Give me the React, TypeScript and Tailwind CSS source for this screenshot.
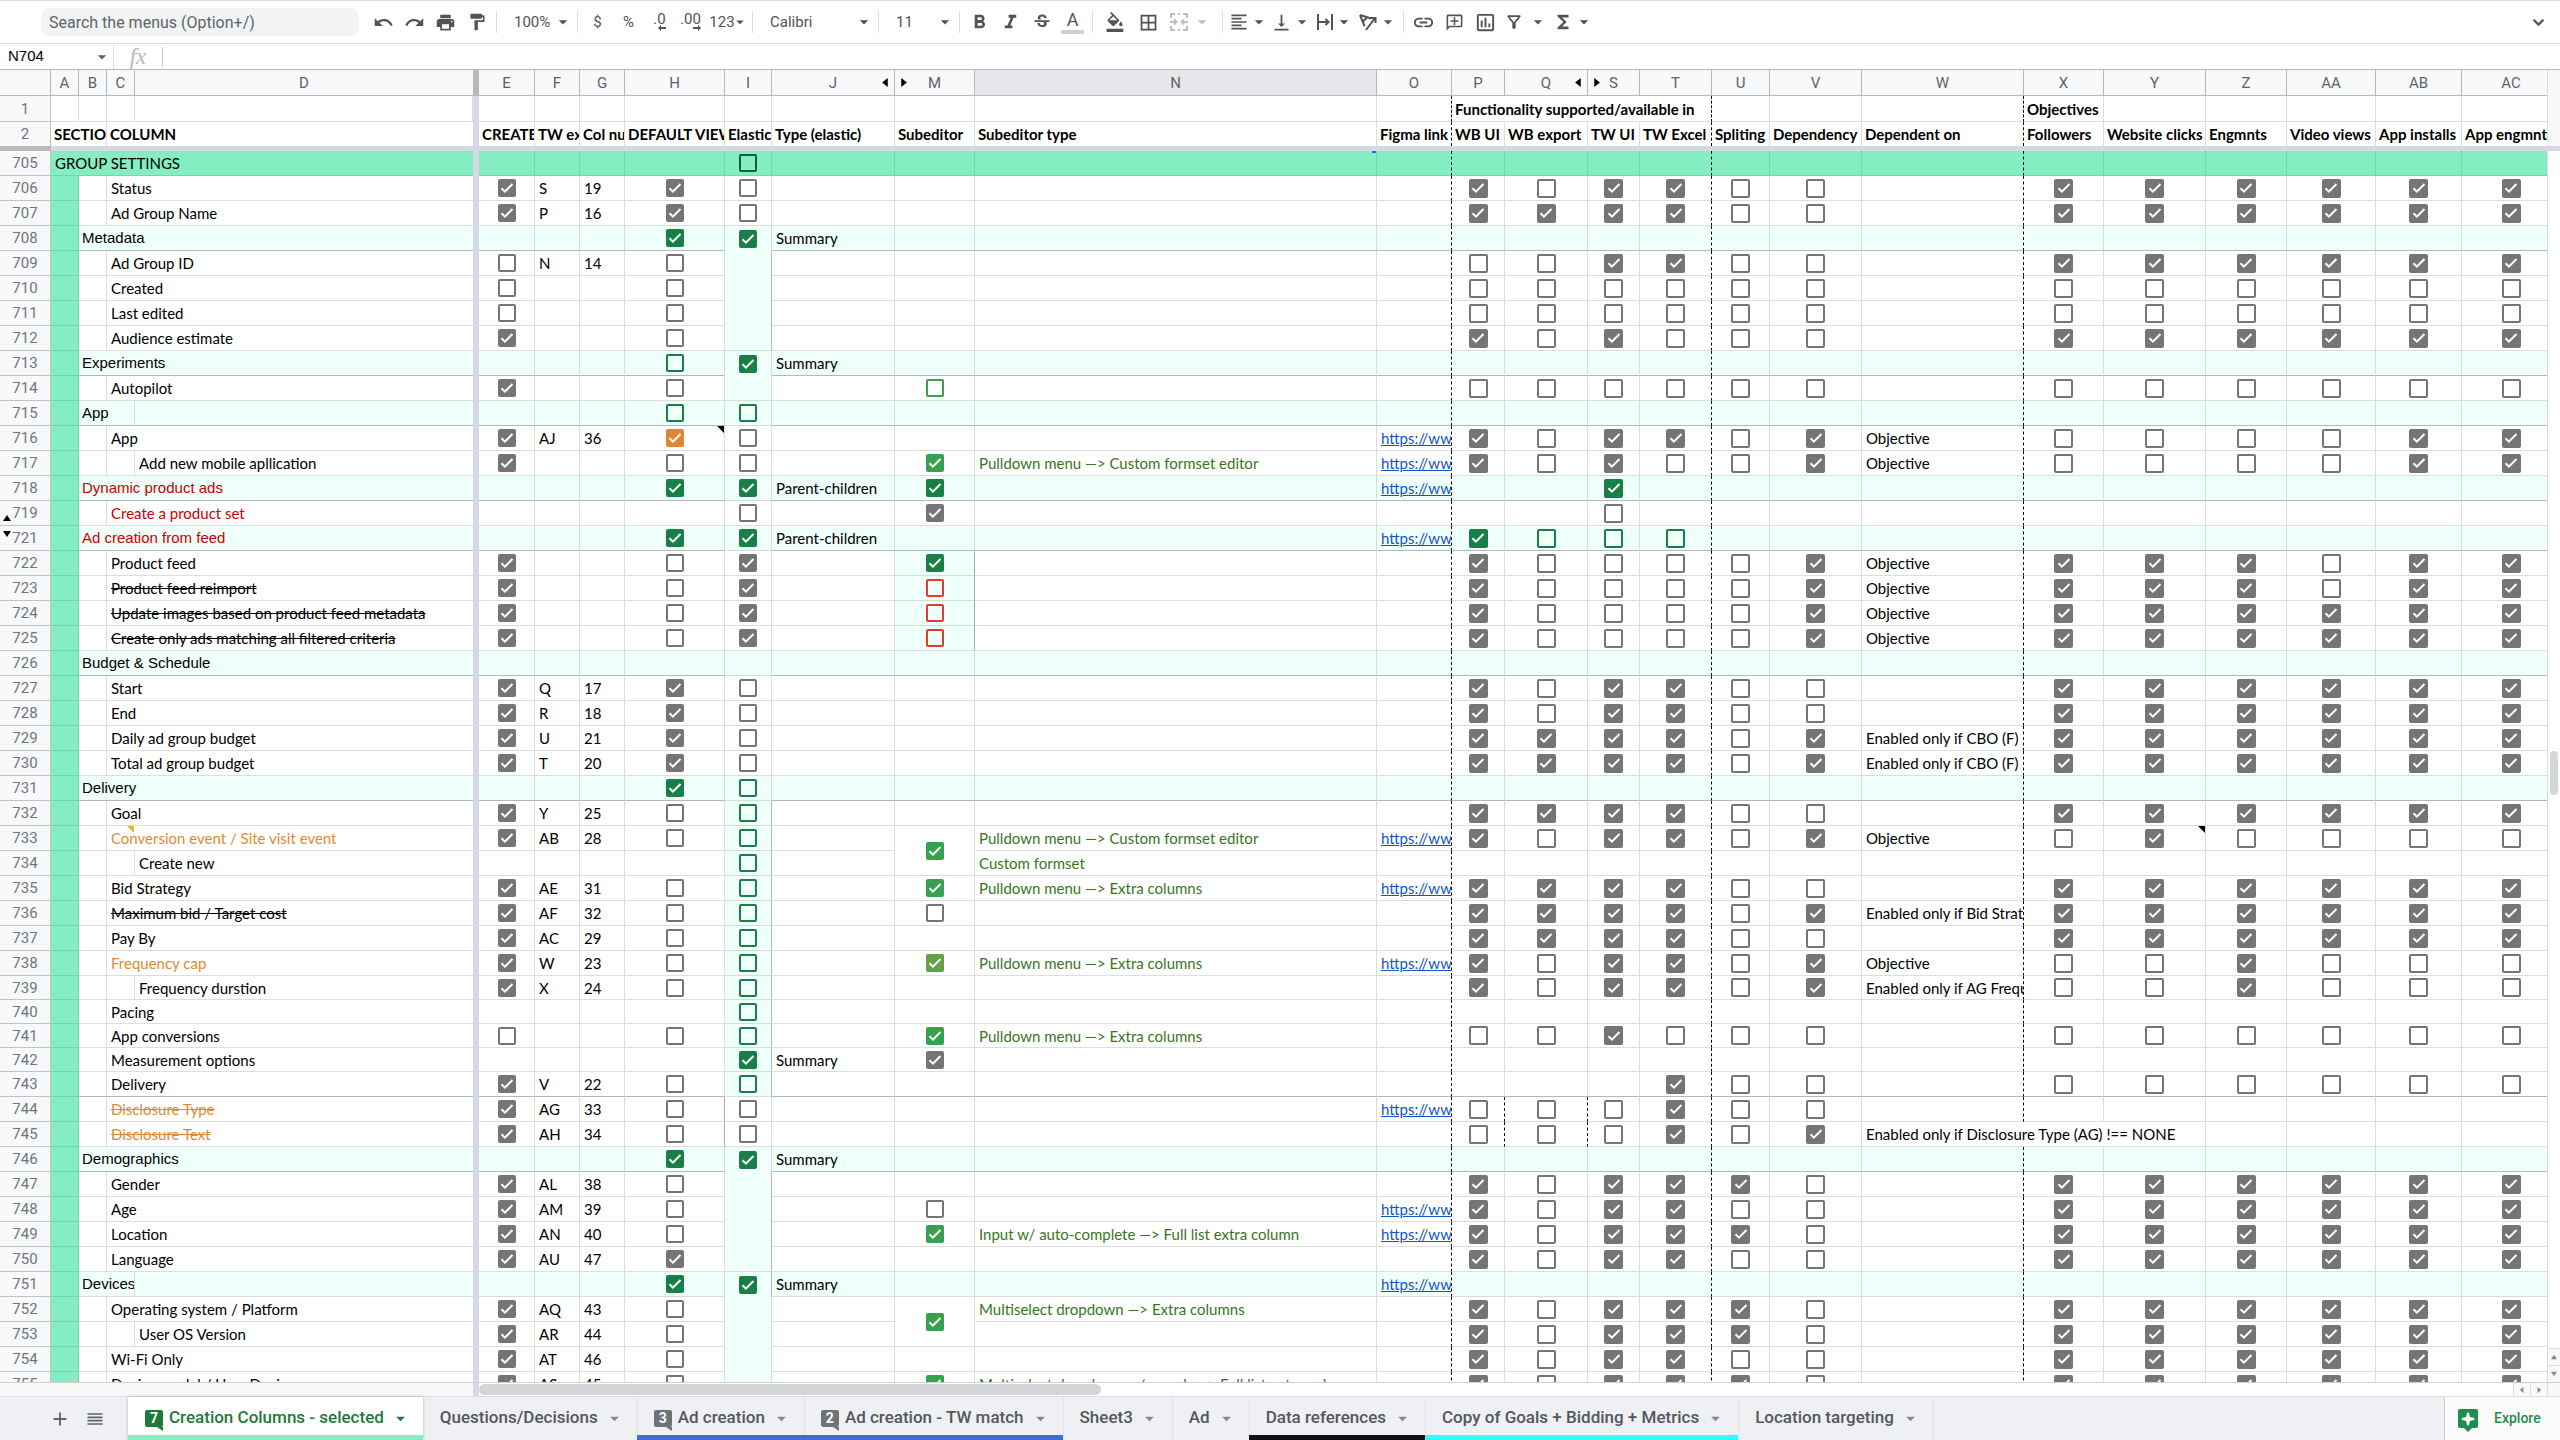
import {Fragment, type ReactNode} from "react";
import {ChevronDown, Sparkle} from "lucide-react";
import {
  MdAdd,
  MdArrowDropDown,
  MdBorderAll,
  MdFormatAlignLeft,
  MdFormatBold,
  MdFormatColorFill,
  MdFormatItalic,
  MdFormatPaint,
  MdFunctions,
  MdInsertLink,
  MdOutlineAddComment,
  MdOutlineFilterAlt,
  MdOutlineInsertChart,
  MdPrint,
  MdRedo,
  MdReorder,
  MdStrikethroughS,
  MdTextRotationAngleup,
  MdUndo,
  MdVerticalAlignBottom,
} from "react-icons/md";

type Row = {
  n: number;
  // "b" is a section heading, "c" a column, "d" a nested column
  level: "a" | "b" | "c" | "d";
  label: string;
  tone?: string;
  // E, H, I, M
  left: string;
  code?: string;
  num?: string;
  type?: string;
  sub?: string;
  link?: boolean;
  // P, Q, S, T, U, V
  right?: string;
  on?: string;
  // X, Y, Z, AA, AB, AC
  obj?: string;
  iSpan?: number;
  mSpan?: number;
  short?: boolean;
};

const ALL = "111111";
const NONE = "000000";
const RED = "text-[#cc0000]";
const ORANGE = "text-[#e08a36]";
const CROSSED = "line-through";
const CUSTOM = "Pulldown menu —> Custom formset editor";
const EXTRA = "Pulldown menu —> Extra columns";

const rows: Row[] = [
  {n: 705, level: "a", label: "GROUP SETTINGS", left: "..d."},
  {n: 706, level: "c", label: "Status", left: "110.", code: "S", num: "19", right: "101100", obj: ALL},
  {n: 707, level: "c", label: "Ad Group Name", left: "110.", code: "P", num: "16", right: "111100", obj: ALL},
  {n: 708, level: "b", label: "Metadata", left: ".GG.", type: "Summary"},
  {n: 709, level: "c", label: "Ad Group ID", left: "00..", code: "N", num: "14", right: "001100", obj: ALL, iSpan: 4},
  {n: 710, level: "c", label: "Created", left: "00..", right: NONE, obj: NONE, iSpan: 0},
  {n: 711, level: "c", label: "Last edited", left: "00..", right: NONE, obj: NONE, iSpan: 0},
  {n: 712, level: "c", label: "Audience estimate", left: "10..", right: "101000", obj: ALL, iSpan: 0},
  {n: 713, level: "b", label: "Experiments", left: ".gG.", type: "Summary"},
  {n: 714, level: "c", label: "Autopilot", left: "10.s", right: NONE, obj: NONE},
  {n: 715, level: "b", label: "App", left: ".gg."},
  {n: 716, level: "c", label: "App", left: "1O0.", code: "AJ", num: "36", link: true, right: "101101", on: "Objective", obj: "000011"},
  {n: 717, level: "d", label: "Add new mobile apllication", left: "100L", sub: CUSTOM, link: true, right: "101001", on: "Objective", obj: "000011"},
  {n: 718, level: "b", label: "Dynamic product ads", tone: RED, left: ".GGG", type: "Parent-children", link: true, right: "..G..."},
  {n: 719, level: "c", label: "Create a product set", tone: RED, left: "..01", right: "..0..."},
  {n: 721, level: "b", label: "Ad creation from feed", tone: RED, left: ".GG.", type: "Parent-children", link: true, right: "Gggg.."},
  {n: 722, level: "c", label: "Product feed", left: "101G", right: "100001", on: "Objective", obj: "111011"},
  {n: 723, level: "c", label: "Product feed reimport", tone: CROSSED, left: "101r", right: "100001", on: "Objective", obj: "111011"},
  {n: 724, level: "c", label: "Update images based on product feed metadata", tone: CROSSED, left: "101r", right: "100001", on: "Objective", obj: ALL},
  {n: 725, level: "c", label: "Create only ads matching all filtered criteria", tone: CROSSED, left: "101r", right: "100001", on: "Objective", obj: ALL},
  {n: 726, level: "b", label: "Budget & Schedule", left: "...."},
  {n: 727, level: "c", label: "Start", left: "110.", code: "Q", num: "17", right: "101100", obj: ALL},
  {n: 728, level: "c", label: "End", left: "110.", code: "R", num: "18", right: "101100", obj: ALL},
  {n: 729, level: "c", label: "Daily ad group budget", left: "110.", code: "U", num: "21", right: "111101", on: "Enabled only if CBO (F) = FALSE", obj: ALL},
  {n: 730, level: "c", label: "Total ad group budget", left: "110.", code: "T", num: "20", right: "111101", on: "Enabled only if CBO (F) = FALSE", obj: ALL},
  {n: 731, level: "b", label: "Delivery", left: ".Gg."},
  {n: 732, level: "c", label: "Goal", left: "10g.", code: "Y", num: "25", right: "111100", obj: ALL},
  {n: 733, level: "c", label: "Conversion event / Site visit event", tone: ORANGE, left: "10gL", code: "AB", num: "28", sub: CUSTOM, link: true, right: "101101", on: "Objective", obj: "010000", mSpan: 2},
  {n: 734, level: "d", label: "Create new", left: "..g.", sub: "Custom formset", mSpan: 0},
  {n: 735, level: "c", label: "Bid Strategy", left: "10gL", code: "AE", num: "31", sub: EXTRA, link: true, right: "111100", obj: ALL},
  {n: 736, level: "c", label: "Maximum bid / Target cost", tone: CROSSED, left: "10g0", code: "AF", num: "32", right: "111101", on: "Enabled only if Bid Strategy", obj: ALL},
  {n: 737, level: "c", label: "Pay By", left: "10g.", code: "AC", num: "29", right: "111100", obj: ALL},
  {n: 738, level: "c", label: "Frequency cap", tone: ORANGE, left: "10gl", code: "W", num: "23", sub: EXTRA, link: true, right: "101101", on: "Objective", obj: "001000"},
  {n: 739, level: "d", label: "Frequency durstion", left: "10g.", code: "X", num: "24", right: "101101", on: "Enabled only if AG Frequency", obj: "001000", short: true},
  {n: 740, level: "c", label: "Pacing", left: "..g.", short: true},
  {n: 741, level: "c", label: "App conversions", left: "00gL", sub: EXTRA, right: "001000", obj: NONE, short: true},
  {n: 742, level: "c", label: "Measurement options", left: "..G1", type: "Summary", short: true},
  {n: 743, level: "c", label: "Delivery", left: "10g.", code: "V", num: "22", right: "...100", obj: NONE},
  {n: 744, level: "c", label: "Disclosure Type", tone: `${ORANGE} ${CROSSED}`, left: "100.", code: "AG", num: "33", link: true, right: "000100"},
  {n: 745, level: "c", label: "Disclosure Text", tone: `${ORANGE} ${CROSSED}`, left: "100.", code: "AH", num: "34", right: "000101", on: "Enabled only if Disclosure Type (AG) !== NONE"},
  {n: 746, level: "b", label: "Demographics", left: ".GG.", type: "Summary"},
  {n: 747, level: "c", label: "Gender", left: "10..", code: "AL", num: "38", right: "101110", obj: ALL, iSpan: 4},
  {n: 748, level: "c", label: "Age", left: "10.0", code: "AM", num: "39", link: true, right: "101100", obj: ALL, iSpan: 0},
  {n: 749, level: "c", label: "Location", left: "10.L", code: "AN", num: "40", sub: "Input w/ auto-complete —> Full list extra column", link: true, right: "101110", obj: ALL, iSpan: 0},
  {n: 750, level: "c", label: "Language", left: "11..", code: "AU", num: "47", right: "101100", obj: ALL, iSpan: 0},
  {n: 751, level: "b", label: "Devices", left: ".GG.", type: "Summary", link: true},
  {n: 752, level: "c", label: "Operating system / Platform", left: "10.L", code: "AQ", num: "43", sub: "Multiselect dropdown —> Extra columns", right: "101110", obj: ALL, iSpan: 4, mSpan: 2},
  {n: 753, level: "d", label: "User OS Version", left: "10..", code: "AR", num: "44", right: "101110", obj: ALL, iSpan: 0, mSpan: 0},
  {n: 754, level: "c", label: "Wi-Fi Only", left: "10..", code: "AT", num: "46", right: "101100", obj: ALL, iSpan: 0},
  {n: 755, level: "c", label: "Device model / User Device", left: "10.L", code: "AS", num: "45", sub: "Multiselect dropdown w/ search —> Full list extra columns", right: "101110", obj: ALL, iSpan: 0},
];

const columns = [
  {id: "A", w: "w-[28px]"},
  {id: "B", w: "w-[28px]"},
  {id: "C", w: "w-[28px]"},
  {id: "D", w: "w-[338px]"},
  {id: "E", w: "w-[56px]"},
  {id: "F", w: "w-[45px]"},
  {id: "G", w: "w-[45px]"},
  {id: "H", w: "w-[100px]"},
  {id: "I", w: "w-[47px]"},
  {id: "J", w: "w-[123px]"},
  {id: "M", w: "w-[80px]"},
  {id: "N", w: "w-[402px]"},
  {id: "O", w: "w-[75px]"},
  {id: "P", w: "w-[53px]"},
  {id: "Q", w: "w-[83px]"},
  {id: "S", w: "w-[52px]"},
  {id: "T", w: "w-[72px]"},
  {id: "U", w: "w-[58px]"},
  {id: "V", w: "w-[92px]"},
  {id: "W", w: "w-[162px]"},
  {id: "X", w: "w-[80px]"},
  {id: "Y", w: "w-[102px]"},
  {id: "Z", w: "w-[81px]"},
  {id: "AA", w: "w-[89px]"},
  {id: "AB", w: "w-[86px]"},
  {id: "AC", w: ""},
];

const titles = [
  "CREATE", "TW export", "Col number", "DEFAULT VIEW", "Elastic", "Type (elastic)", "Subeditor", "Subeditor type",
  "Figma link", "WB UI", "WB export", "TW UI", "TW Excel", "Spliting", "Dependency", "Dependent on",
  "Followers", "Website clicks", "Engmnts", "Video views", "App installs", "App engmnts",
];

const boxStyles: Record<string, string> = {
  "0": "border-[#757575]",
  "1": "border-[#757575] bg-[#757575]",
  g: "border-[#188046]",
  G: "border-[#188046] bg-[#188046]",
  s: "border-[#37a150]",
  L: "border-[#37a150] bg-[#37a150]",
  l: "border-[#63a046] bg-[#63a046]",
  O: "border-[#e08632] bg-[#e08632]",
  r: "border-[#e23b2e]",
  d: "border-[#12603a]",
};

const Check = ({kind, name, big}: {kind: string; name: string; big?: boolean}) => {
  if (kind === "." || !kind) return null;
  return (
    <label className="grid place-items-center">
      <input
        type="checkbox"
        aria-label={name}
        defaultChecked={"1GLlO".includes(kind)}
        className={`col-start-1 row-start-1 appearance-none rounded-[2px] border-2 ${big ? "size-[19px]" : "size-[18px]"} ${boxStyles[kind]}`}
      />
      {"1GLlO".includes(kind) && (
        <svg viewBox="0 0 18 18" className="pointer-events-none col-start-1 row-start-1 size-[18px]">
          <path d="M3.5 9.2l3.4 3.4 7.6-7.6" fill="none" stroke="#fff" strokeWidth="2" />
        </svg>
      )}
    </label>
  );
};

const arrows = {
  up: "M0 7h8L4 1z",
  down: "M0 1h8L4 7z",
  left: "M6 0v8L1 4z",
  right: "M2 0v8l5-4z",
};

const Arrow = ({to, className}: {to: keyof typeof arrows; className: string}) => (
  <svg viewBox="0 0 8 8" className={className}>
    <path d={arrows[to]} fill="currentColor" />
  </svg>
);

const Note = ({className}: {className: string}) => (
  <svg viewBox="0 0 7 7" className={`absolute top-0 size-[7px] ${className}`}>
    <path d="M0 0h7v7z" fill="currentColor" />
  </svg>
);

const line = "border-[#dcdddd]";
const mintLine = "border-[#cfe0d9]";
const dashedEdge = "border-r border-r-black [border-right-style:dashed]";

const edge = (id: string) => (id === "O" || id === "T" || id === "W" ? dashedEdge : "border-r");

const DataRow = ({row}: {row: Row}) => {
  const {n, level} = row;
  const green = level === "a";
  const section = level === "b";
  const [e, h, i, m] = row.left.split("");
  const right = (row.right ?? "......").split("");
  const obj = (row.obj ?? "......").split("");
  const bg = green ? "bg-[#85edc2]" : section ? "bg-[#effff9]" : "";
  const base = green ? "border-[#77d4ad]" : section ? mintLine : line;
  // headings close with a darker rule, as does the row before the disclosures
  const dark = (section && n !== 751) || n === 743;
  const bottom = dark ? "[border-bottom-color:#b1bab6]" : "";
  const cell = `border-b p-0 ${bg} ${bottom}`;
  const text = `${cell} overflow-hidden whitespace-nowrap pl-1`;
  const heading = `${cell} overflow-hidden whitespace-nowrap pl-[3px] font-['Liberation_Sans',sans-serif]`;
  const mintI = (n >= 709 && n <= 714 && !section) || (n >= 732 && n <= 743) || n >= 747;
  const mintM = n >= 722 && n <= 725;
  const openI = [708, 713, 746, 751].includes(n);
  const disclosure = n === 744 || n === 745;

  return (
    <tr className={row.short ? "h-6" : "h-[25px]"}>
      <th scope="row" className="relative border-r border-b border-[#c0c2c4] bg-[#f8f9fa] p-0 font-[Roboto,sans-serif] text-[15px] font-normal text-[#70757a]">
        {n}
        {n === 719 && <Arrow to="up" className="absolute bottom-[3px] left-[3px] size-2 text-black" />}
        {n === 721 && <Arrow to="down" className="absolute top-1 left-[3px] size-2 text-black" />}
      </th>
      {green ? (
        <td colSpan={4} className={`${text} border-[#77d4ad]`}>{row.label}</td>
      ) : (
        <>
          <td className="border-r border-b border-[#77d4ad] bg-[#85edc2] p-0" />
          {section ? (
            n === 715 || n === 751 ? (
              <>
                <td colSpan={2} className={`${heading} border-r ${base}`}>{row.label}</td>
                <td className={`${cell} ${base}`} />
              </>
            ) : (
              <td colSpan={3} className={`${heading} ${base} ${row.tone ?? ""}`}>{row.label}</td>
            )
          ) : (
            <>
              <td className={`${cell} border-r ${base}`} />
              {level === "d" ? (
                <>
                  <td className={`${cell} border-r ${base}`} />
                  <td className={`${text} ${base}`}>{row.label}</td>
                </>
              ) : (
                <td colSpan={2} className={`${text} relative ${base} ${row.tone ?? ""}`}>
                  {row.label}
                  {n === 733 && <Note className="left-5 text-[#f0b429]" />}
                </td>
              )}
            </>
          )}
        </>
      )}
      <td className="bg-[#d5d9e5] p-0" />
      <td className={`${cell} border-r ${base}`}><Check kind={e} name={`E${n}`} /></td>
      <td className={`${text} border-r ${base}`}>{row.code}</td>
      <td className={`${text} border-r ${base}`}>{row.num}</td>
      <td className={`${cell} relative border-r ${base} ${disclosure ? "[border-right-color:#a8adab]" : ""}`}>
        <Check kind={h} name={`H${n}`} />
        {n === 716 && <Note className="right-0 text-black" />}
      </td>
      {row.iSpan !== 0 && (
        <td
          rowSpan={row.iSpan}
          className={`border-r p-0 ${openI ? "" : "border-b"} ${mintI ? "bg-[#effff9]" : bg} ${mintI ? mintLine : base} ${mintI && n !== 714 && n < 752 ? "[border-right-color:#b1bab6]" : ""}`}
        >
          <Check kind={i} name={`I${n}`} />
        </td>
      )}
      <td className={`${text} border-r ${base}`}>{row.type}</td>
      {row.mSpan !== 0 && (
        <td
          rowSpan={row.mSpan}
          className={`${cell} border-r ${mintM ? "bg-[#effff9] [border-bottom-color:#cfe0d9] [border-right-color:#a8adab]" : base}`}
        >
          <Check kind={m} name={`M${n}`} />
        </td>
      )}
      <td className={`${text} relative border-r text-[#38761d] ${base}`}>
        {row.sub}
        {green && <span className="absolute top-0 right-0 h-[2px] w-1 bg-[#1a73e8]" />}
      </td>
      <td className={`${text} ${base} ${edge("O")}`}>
        {row.link && <a href="#figma" className="text-[#1155cc] underline">https://www.figma.com</a>}
      </td>
      {right.map((kind, k) => {
        const id = ["P", "Q", "S", "T", "U", "V"][k];
        return (
          <td key={id} className={`${cell} ${base} ${disclosure && k < 2 ? dashedEdge : edge(id)}`}>
            <Check kind={kind} name={`${id}${n}`} big />
          </td>
        );
      })}
      {n === 745 ? (
        <td colSpan={3} className={`${text} border-r ${base}`}>{row.on}</td>
      ) : (
        <td className={`${text} ${base} ${edge("W")}`}>{row.on}</td>
      )}
      {obj.map((kind, k) => {
        if (n === 745 && k < 2) return null;
        const id = ["X", "Y", "Z", "AA", "AB", "AC"][k];
        return (
          <td key={id} className={`${cell} relative border-r ${base}`}>
            <Check kind={kind} name={`${id}${n}`} big />
            {n === 733 && id === "Y" && <Note className="right-0 text-black" />}
          </td>
        );
      })}
    </tr>
  );
};

// the last column runs on under the vertical scroll bar
const Sheet = () => (
  <table className="w-[calc(100%+14px)] table-fixed border-separate border-spacing-0 text-[15px] leading-[22px] text-black">
    <colgroup>
      <col className="w-[51px]" />
      {columns.map((c) => (
        <Fragment key={c.id}>
          <col className={c.w} />
          {c.id === "D" && <col className="w-[6px]" />}
        </Fragment>
      ))}
    </colgroup>
    <thead className="font-[Roboto,sans-serif] text-[#5f6368]">
      <tr className="h-[26px]">
        <th className="border-r border-b border-[#b7b9bb] bg-[#f8f9fa] p-0" />
        {columns.map((c) => (
          <Fragment key={c.id}>
            <th
              scope="col"
              className={`relative border-b border-[#b7b9bb] p-0 font-normal ${c.id === "N" ? "bg-[#e6e7ea]" : "bg-[#f8f9fa]"} ${c.id === "D" ? "" : "border-r"}`}
            >
              {c.id}
              {(c.id === "J" || c.id === "Q") && <Arrow to="left" className="absolute top-2 right-1 size-[9px] text-black" />}
              {(c.id === "M" || c.id === "S") && <Arrow to="right" className="absolute top-2 left-1 size-[9px] text-black" />}
            </th>
            {c.id === "D" && <th className="bg-[#b7b9bb] p-0" />}
          </Fragment>
        ))}
      </tr>
    </thead>
    <tbody className="font-[Lato,sans-serif]">
      <tr className="h-[26px] font-bold">
        <th scope="row" className="border-r border-b border-[#c0c2c4] bg-[#f8f9fa] p-0 font-[Roboto,sans-serif] font-normal text-[#70757a]">1</th>
        {columns.map((c) => {
          if (c.id === "Q" || c.id === "S" || c.id === "T") return null;
          const words = c.id === "P" ? "Functionality supported/available in" : c.id === "X" ? "Objectives" : "";
          return (
            <Fragment key={c.id}>
              <td
                colSpan={c.id === "P" ? 4 : 1}
                className={`overflow-hidden border-b p-0 pl-[3px] whitespace-nowrap ${line} ${edge(c.id === "P" ? "T" : c.id)}`}
              >
                {words}
              </td>
              {c.id === "D" && <td className="bg-[#d5d9e5] p-0" />}
            </Fragment>
          );
        })}
      </tr>
      <tr className="h-6 font-bold">
        <th scope="row" className="border-r border-[#c0c2c4] bg-[#f8f9fa] p-0 font-[Roboto,sans-serif] font-normal text-[#70757a]">2</th>
        <td colSpan={2} className={`overflow-hidden border-r p-0 pl-[3px] whitespace-nowrap ${line}`}>SECTION</td>
        <td colSpan={2} className="p-0 pl-[3px]">COLUMN</td>
        <td className="bg-[#d5d9e5] p-0" />
        {titles.map((title, k) => (
          <td key={title} className={`overflow-hidden p-0 pl-[3px] whitespace-nowrap ${line} ${edge(columns[k + 4].id)}`}>{title}</td>
        ))}
      </tr>
      <tr className="h-[5px] leading-none">
        <td className="bg-[#b7b9bb] p-0" />
        <td colSpan={27} className="bg-[#d5d9e5] p-0" />
      </tr>
      {rows.map((row) => <DataRow key={row.n} row={row} />)}
    </tbody>
  </table>
);

const Divider = () => <span className="mx-1 h-[22px] w-px shrink-0 bg-[#dadce0]" />;

const Tool = ({name, children, width = "w-[31px]"}: {name: string; children: ReactNode; width?: string}) => (
  <button type="button" aria-label={name} className={`flex h-7 shrink-0 items-center justify-center ${width}`}>
    {children}
  </button>
);

const Pick = ({name, value, width}: {name: string; value: string; width: string}) => (
  <label className={`grid shrink-0 items-center ${width}`}>
    <select aria-label={name} className="col-start-1 row-start-1 w-full appearance-none pl-[13px] text-[15px] outline-none">
      <option>{value}</option>
    </select>
    <MdArrowDropDown className="pointer-events-none col-start-1 row-start-1 size-5 justify-self-end" />
  </label>
);

const Toolbar = () => (
  <div className="flex h-11 shrink-0 items-center border-t border-b border-[#dadce0] pr-3 pl-[41px] font-[Roboto,sans-serif] text-[15px] text-[#505357]">
    <input
      aria-label="Search the menus"
      placeholder="Search the menus (Option+/)"
      className="mr-[9px] h-7 w-[318px] shrink-0 rounded-lg bg-[#f1f3f4] px-2 text-[16px] placeholder:text-[#5f6368]"
    />
    <Tool name="Undo"><MdUndo size={21} /></Tool>
    <Tool name="Redo"><MdRedo size={21} /></Tool>
    <Tool name="Print"><MdPrint size={21} /></Tool>
    <Tool name="Paint format"><MdFormatPaint size={20} /></Tool>
    <Divider />
    <Pick name="Zoom" value="100%" width="w-[72px]" />
    <Divider />
    <Tool name="Currency">$</Tool>
    <Tool name="Percent">%</Tool>
    <Tool name="Fewer decimals">
      <span className="flex flex-col items-end leading-3">
        .0
        <svg viewBox="0 0 8 6" className="h-[6px] w-2"><path d="M0 3l3-3v2h5v2H3v2z" fill="currentColor" /></svg>
      </span>
    </Tool>
    <Tool name="More decimals">
      <span className="flex flex-col items-end leading-3">
        .00
        <svg viewBox="0 0 8 6" className="h-[6px] w-2"><path d="M8 3L5 0v2H0v2h5v2z" fill="currentColor" /></svg>
      </span>
    </Tool>
    <Tool name="More formats" width="w-[42px]">123<MdArrowDropDown size={18} className="-mx-1" /></Tool>
    <Divider />
    <Pick name="Font" value="Calibri" width="w-[117px]" />
    <Divider />
    <Pick name="Font size" value="11" width="w-[72px]" />
    <Divider />
    <Tool name="Bold"><MdFormatBold size={23} /></Tool>
    <Tool name="Italic"><MdFormatItalic size={23} /></Tool>
    <Tool name="Strikethrough"><MdStrikethroughS size={20} /></Tool>
    <Tool name="Text color">
      <span className="flex w-[23px] flex-col items-center border-b-4 border-[#cfd0d1] text-[18px] leading-[20px]">A</span>
    </Tool>
    <Divider />
    <Tool name="Fill color" width="w-9"><MdFormatColorFill size={20} /></Tool>
    <Tool name="Borders"><MdBorderAll size={21} /></Tool>
    <Tool name="Merge cells" width="w-[54px]">
      <svg viewBox="0 0 18 18" className="size-[18px] text-[#bdc1c6]" fill="none" stroke="currentColor" strokeWidth="2">
        <path d="M1 5V1h4M8 1h2M13 1h4v4M1 13v4h4M8 17h2M13 17h4v-4M0 9h6M18 9h-6M4 6.500L6.500 9 4 11.500M14 6.500L11.500 9l2.500 2.500" />
      </svg>
      <MdArrowDropDown size={20} className="ml-1 text-[#bdc1c6]" />
    </Tool>
    <Divider />
    <Tool name="Horizontal align" width="w-[43px]"><MdFormatAlignLeft size={20} /><MdArrowDropDown size={20} /></Tool>
    <Tool name="Vertical align" width="w-[43px]"><MdVerticalAlignBottom size={21} /><MdArrowDropDown size={20} /></Tool>
    <Tool name="Text wrapping" width="w-[43px]">
      <svg viewBox="0 0 18 18" className="size-[18px]" fill="none" stroke="currentColor" strokeWidth="2">
        <path d="M2 1v16M16 1v16M2 9h10M9.500 6l3 3-3 3" />
      </svg>
      <MdArrowDropDown size={20} />
    </Tool>
    <Tool name="Text rotation" width="w-[43px]">
      <svg viewBox="0 0 20 20" className="size-5" fill="none" stroke="currentColor" strokeWidth="2">
        <path d="M2 3l11 3.500M2 3l4.500 11M9 5.500L5 9.500M8 18L17 6M12.500 6H17.500v5" />
      </svg>
      <MdArrowDropDown size={20} />
    </Tool>
    <Divider />
    <Tool name="Insert link"><MdInsertLink size={23} /></Tool>
    <Tool name="Insert comment"><MdOutlineAddComment size={19} className="-scale-x-100" /></Tool>
    <Tool name="Insert chart"><MdOutlineInsertChart size={23} /></Tool>
    <Tool name="Filter" width="w-[50px]"><MdOutlineFilterAlt size={20} /><MdArrowDropDown size={20} className="ml-1" /></Tool>
    <Tool name="Functions" width="w-[43px]"><MdFunctions size={22} /><MdArrowDropDown size={20} /></Tool>
    <span className="flex-1" />
    <Tool name="Hide the menus" width="w-5"><ChevronDown size={17} strokeWidth={3} /></Tool>
  </div>
);

const FormulaBar = () => (
  <div className="flex h-[26px] shrink-0 items-center border-b border-[#b7b9bb]">
    <input aria-label="Name box" defaultValue="N704" className="w-[92px] pl-2 font-['Liberation_Sans',sans-serif] text-[15px] outline-none" />
    <MdArrowDropDown size={20} className="text-[#5f6368]" />
    <span className="ml-px h-full w-px bg-[#dadce0]" />
    <label htmlFor="formula" className="w-12 text-center font-['Liberation_Serif',serif] text-[23px] leading-6 text-[#b7b9bb] italic">fx</label>
    <span className="h-5 w-px bg-[#c6c8ca]" />
    <input id="formula" className="flex-1 px-2 text-[15px] outline-none" />
  </div>
);

const tabs = [
  {name: "Creation Columns - selected", count: 7, bar: "border-[#85edc2]", active: true},
  {name: "Questions/Decisions", bar: "border-transparent"},
  {name: "Ad creation", count: 3, bar: "border-[#3b6fd6]"},
  {name: "Ad creation - TW match", count: 2, bar: "border-[#3b6fd6]"},
  {name: "Sheet3", bar: "border-transparent"},
  {name: "Ad", bar: "border-transparent"},
  {name: "Data references", bar: "border-[#101218]"},
  {name: "Copy of Goals + Bidding + Metrics", bar: "border-[#2effff]"},
  {name: "Location targeting", bar: "border-transparent"},
];

const TabBar = () => (
  <div className="flex h-11 shrink-0 border-t border-[#dcdee0] bg-[#eff0f3] font-[Roboto,sans-serif] text-[17px] font-medium text-[#54575c]">
    <div className="flex w-[128px] items-center pl-[49px] text-[#5f6368]">
      <button type="button" aria-label="Add sheet" className="w-6"><MdAdd size={22} /></button>
      <button type="button" aria-label="All sheets" className="ml-3"><MdReorder size={20} /></button>
    </div>
    {tabs.map((tab) => (
      <button
        type="button"
        key={tab.name}
        className={`flex items-center gap-[6px] border-b-[5px] pt-1 pr-3 pl-[17px] whitespace-nowrap ${tab.bar} ${tab.active ? "bg-white text-[#1e7a3a] shadow-[0_0_3px_rgba(0,0,0,0.25)]" : "shadow-[1px_0_0_#e0e2e5]"}`}
      >
        {tab.count && (
          <span className={`relative h-[17px] w-[18px] rounded-[2px] text-[14px] leading-[17px] font-bold text-white ${tab.active ? "bg-[#1e7a3a]" : "bg-[#6f7378]"}`}>
            {tab.count}
            <svg viewBox="0 0 6 4" className={`absolute top-full right-0 h-1 w-[6px] ${tab.active ? "text-[#1e7a3a]" : "text-[#6f7378]"}`}>
              <path d="M0 0h6v4z" fill="currentColor" />
            </svg>
          </span>
        )}
        {tab.name}
        <MdArrowDropDown size={21} className={tab.active ? "" : "text-[#85898e]"} />
      </button>
    ))}
    <span className="flex-1" />
    <button type="button" className="flex w-[116px] items-center gap-4 border-l border-[#c8cacd] bg-[#fbfbfc] pl-[13px] text-[14px] text-[#1e8e4e]">
      <span className="relative flex h-[19px] w-5 items-center justify-center rounded-[2px] bg-[#1e8e4e] text-white">
        <Sparkle size={14} fill="currentColor" />
        <svg viewBox="0 0 8 4" className="absolute top-full left-[6px] h-1 w-2 text-[#1e8e4e]">
          <path d="M0 0h8L4 4z" fill="currentColor" />
        </svg>
      </span>
      Explore
    </button>
  </div>
);

const scroller = "flex items-center justify-center border-[#dadce0] bg-[#f8f8f8]";

const App = () => (
  <div className="flex h-screen flex-col overflow-hidden bg-white">
    <Toolbar />
    <FormulaBar />
    <div className="flex min-h-0 flex-1">
      <div className="min-w-0 flex-1 overflow-hidden"><Sheet /></div>
      <div className="flex w-[13px] flex-col border-l border-[#dadce0] text-[#85898e]">
        <span className="h-[76px] bg-[#f8f8f8]" />
        <span className="h-[5px] bg-[#d5d9e5]" />
        <span className="mt-[600px] ml-[2px] h-[44px] w-2 rounded-full bg-[#d4d6da]" />
        <span className="flex-1" />
        <button type="button" aria-label="Scroll up" className={`h-[17px] border-t ${scroller}`}><Arrow to="up" className="size-[6px]" /></button>
        <button type="button" aria-label="Scroll down" className={`h-[17px] border-t ${scroller}`}><Arrow to="down" className="size-[6px]" /></button>
      </div>
    </div>
    <div className="flex h-[14px] shrink-0 border-t border-[#cfd1d3] text-[#85898e]">
      <span className="w-[473px] bg-[#f8f8f8]" />
      <span className="w-[6px] bg-[#d5d9e5]" />
      <span className="mt-px h-[11px] w-[622px] rounded-full bg-[#d4d5d9]" />
      <span className="flex-1" />
      <button type="button" aria-label="Scroll left" className={`w-[17px] border-l ${scroller}`}><Arrow to="left" className="size-[6px]" /></button>
      <button type="button" aria-label="Scroll right" className={`w-[17px] border-l ${scroller}`}><Arrow to="right" className="size-[6px]" /></button>
      <span className="w-[13px] border-l border-[#dadce0] bg-[#f8f8f8]" />
    </div>
    <TabBar />
  </div>
);

export default App;
